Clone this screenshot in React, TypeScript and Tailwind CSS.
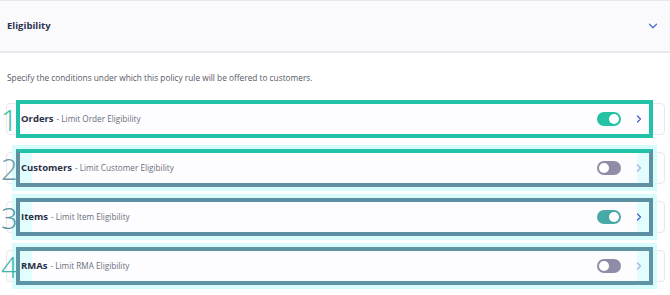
import { ChevronDown, ChevronRight } from "lucide-react";

type Rule = {
  num: string;
  title: string;
  desc: string;
  on: boolean;
  numColor: string;
  box: string;
};

const rules: Rule[] = [
  {
    num: "1",
    title: "Orders",
    desc: "Limit Order Eligibility",
    on: true,
    numColor: "text-[#2cc0a6]",
    box: "border-[#22c2a8]",
  },
  {
    num: "2",
    title: "Customers",
    desc: "Limit Customer Eligibility",
    on: false,
    numColor: "text-[#6b98a8]",
    box: "border-[#6190a3] border-t-[#22c2a8] shadow-[0_0_0_4px_#d8fcfc,inset_12px_0_0_#e2fdfd,inset_-12px_0_0_#e2fdfd]",
  },
  {
    num: "3",
    title: "Items",
    desc: "Limit Item Eligibility",
    on: true,
    numColor: "text-[#5a94a4]",
    box: "border-[#5c8fa2] shadow-[0_0_0_4px_#d8fcfc,inset_12px_0_0_#e2fdfd,inset_-12px_0_0_#e2fdfd]",
  },
  {
    num: "4",
    title: "RMAs",
    desc: "Limit RMA Eligibility",
    on: false,
    numColor: "text-[#3cb4a8]",
    box: "border-[#5f94a5] shadow-[0_0_0_4px_#d8fcfc,inset_12px_0_0_#e2fdfd,inset_-12px_0_0_#e2fdfd]",
  },
];

function Toggle({ on, muted }: { on: boolean; muted?: boolean }) {
  return (
    <div
      className={`flex h-[14px] w-[24px] items-center rounded-full px-[2px] ${
        on ? (muted ? "justify-end bg-[#48a9a6]" : "justify-end bg-[#22c2a2]") : "justify-start bg-[#8f8ca8]"
      }`}
    >
      <div className="h-[10px] w-[10px] rounded-full bg-white" />
    </div>
  );
}

export default function App() {
  return (
    <main
      className="h-[295px] w-[670px] overflow-hidden bg-white"
      style={{ fontFamily: '"Open Sans", "Liberation Sans", sans-serif' }}
    >
      <div className="flex h-[53px] items-center justify-between border-t border-b-2 border-[#e6e8ee] bg-[#fafafc] pl-[7px] pr-[10px]">
        <h3 className="text-[9.5px] font-bold text-[#2d3250]">Eligibility</h3>
        <ChevronDown className="h-[14px] w-[14px] text-[#4a6fd0]" strokeWidth={2.2} />
      </div>

      <p className="pl-[7px] pt-[19px] text-[8.3px] text-[#555866]">
        Specify the conditions under which this policy rule will be offered to customers.
      </p>

      <div className="mt-[19px] flex flex-col gap-[17px] pl-[6px] pr-[5px]">
        {rules.map((r, i) => (
          <div
            key={r.title}
            className="relative flex h-[32px] items-center rounded-[4px] border border-[#e8e9ef] bg-[#fdfdff] pl-[14px] pr-[19px]"
          >
            <div
              className={`pointer-events-none absolute left-[9px] right-[11px] top-[-4px] bottom-[-4px] border-[4px] ${r.box}`}
            />
            <span
              className={`absolute left-[-6px] top-1/2 w-[15px] -translate-y-1/2 text-center text-[29px] font-light leading-none ${r.numColor}`}
            >
              {r.num}
            </span>
            <div className="relative z-10 flex flex-1 items-baseline gap-[3px] whitespace-nowrap">
              <span className="text-[9.5px] font-bold text-[#2a2f45]">{r.title}</span>
              <span className="text-[8.2px] text-[#6b6e7c]">- {r.desc}</span>
            </div>
            <div className="relative z-10 flex items-center gap-[12px]">
              <Toggle on={r.on} muted={i === 2} />
              <ChevronRight
                className={`h-[12px] w-[12px] ${r.on ? "text-[#4a60c4]" : "text-[#a3b1e0]"}`}
                strokeWidth={2.5}
              />
            </div>
          </div>
        ))}
      </div>
    </main>
  );
}
